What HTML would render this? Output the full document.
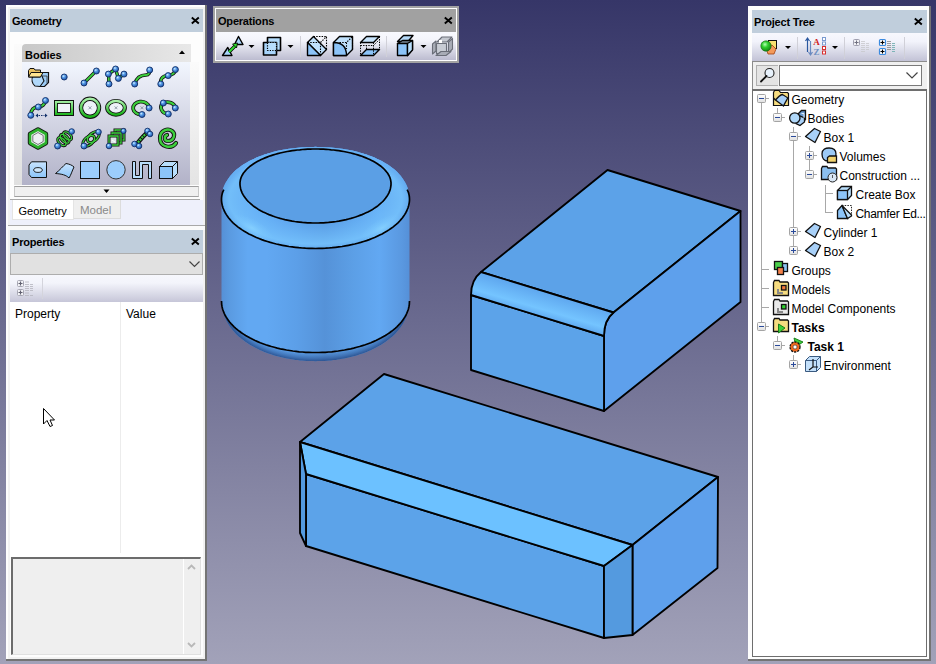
<!DOCTYPE html>
<html><head><meta charset="utf-8">
<style>
*{margin:0;padding:0;box-sizing:border-box}
html,body{width:936px;height:664px;overflow:hidden}
body{position:relative;background:linear-gradient(to bottom,#363668 0px,#a2a2b9 664px);font-family:"Liberation Sans",sans-serif;color:#000}
.a{position:absolute}
.hdr{position:absolute;background:#c0cedc;font-weight:bold;font-size:11px;line-height:23px;padding-left:2px;letter-spacing:-0.2px}
.x{position:absolute;width:11px;height:11px}
.t{position:absolute;font-size:12px;white-space:nowrap;line-height:14px}
</style></head><body>

<!-- 3D scene -->
<svg class="a" style="left:0;top:0" width="936" height="664" viewBox="0 0 936 664" id="scene">
<defs>
<linearGradient id="cylSide" x1="221.5" y1="0" x2="409.5" y2="0" gradientUnits="userSpaceOnUse">
<stop offset="0" stop-color="#5690d6"/>
<stop offset="0.04" stop-color="#5a9ae0"/>
<stop offset="0.14" stop-color="#62a8f2"/>
<stop offset="0.24" stop-color="#62a8f2"/>
<stop offset="0.4" stop-color="#5c9fe8"/>
<stop offset="0.55" stop-color="#5592d8"/>
<stop offset="0.7" stop-color="#5c9fe6"/>
<stop offset="0.84" stop-color="#62a8f2"/>
<stop offset="0.96" stop-color="#5a98e0"/>
<stop offset="1" stop-color="#5590d8"/>
</linearGradient>
<radialGradient id="cylFilHi" gradientUnits="userSpaceOnUse" cx="315.5" cy="199" r="49" gradientTransform="translate(315.5,199) scale(1.918,1) translate(-315.5,-199)">
<stop offset="0" stop-color="#7ac8ff" stop-opacity="0"/>
<stop offset="0.55" stop-color="#7ac8ff" stop-opacity="0"/>
<stop offset="0.8" stop-color="#7ac8ff" stop-opacity="0.45"/>
<stop offset="0.92" stop-color="#7ac8ff" stop-opacity="0.7"/>
<stop offset="1" stop-color="#7ac8ff" stop-opacity="0.25"/>
</radialGradient>
<radialGradient id="cylBotSh" gradientUnits="userSpaceOnUse" cx="315.5" cy="301" r="60" gradientTransform="translate(315.5,301) scale(1.567,1) translate(-315.5,-301)">
<stop offset="0" stop-color="#1c3c78" stop-opacity="0"/>
<stop offset="0.86" stop-color="#1c3c78" stop-opacity="0"/>
<stop offset="0.9" stop-color="#1c3c78" stop-opacity="0.15"/>
<stop offset="0.96" stop-color="#1c3c78" stop-opacity="0.45"/>
<stop offset="1" stop-color="#1c3c78" stop-opacity="0.7"/>
</radialGradient>
<linearGradient id="b2fil" x1="547" y1="292" x2="540" y2="316" gradientUnits="userSpaceOnUse">
<stop offset="0" stop-color="#5ea6ee"/>
<stop offset="0.72" stop-color="#74c4ff"/>
<stop offset="1" stop-color="#62acf2"/>
</linearGradient>
<radialGradient id="hiSpot"><stop offset="0" stop-color="#8ad4ff" stop-opacity="0.75"/><stop offset="0.5" stop-color="#80ccff" stop-opacity="0.35"/><stop offset="1" stop-color="#80ccff" stop-opacity="0"/></radialGradient>
<clipPath id="topFilClip"><path d="M221.5,199.0 L221.6,197.0 L221.8,194.8 L222.1,192.8 L222.6,190.6 L223.2,188.5 L223.9,186.6 L224.8,184.6 L225.7,182.7 L226.8,180.9 L227.9,179.2 L229.1,177.5 L230.4,175.8 L231.8,174.2 L233.3,172.6 L234.8,171.1 L236.5,169.6 L238.2,168.2 L239.9,167.0 L241.5,165.8 L243.3,164.6 L245.1,163.5 L246.9,162.4 L248.8,161.3 L250.8,160.3 L252.6,159.4 L254.7,158.4 L256.5,157.6 L258.5,156.8 L260.4,156.1 L262.3,155.4 L264.4,154.6 L266.5,153.9 L268.6,153.3 L270.8,152.7 L272.9,152.1 L274.8,151.6 L276.8,151.1 L278.9,150.6 L280.9,150.2 L283.0,149.8 L285.1,149.4 L287.2,149.1 L289.3,148.7 L291.5,148.4 L293.6,148.2 L295.7,147.9 L297.9,147.7 L300.1,147.5 L302.3,147.3 L304.5,147.2 L306.7,147.1 L308.9,147.0 L311.1,146.9 L313.3,146.9 L315.5,146.8 L317.7,146.9 L319.9,146.9 L322.1,147.0 L324.3,147.1 L326.5,147.2 L328.7,147.3 L330.9,147.5 L333.1,147.7 L335.3,147.9 L337.4,148.2 L339.5,148.4 L341.7,148.7 L343.8,149.1 L345.9,149.4 L348.0,149.8 L350.1,150.2 L352.1,150.6 L354.2,151.1 L356.2,151.6 L358.1,152.1 L360.2,152.7 L362.4,153.3 L364.5,153.9 L366.6,154.6 L368.7,155.4 L370.6,156.1 L372.5,156.8 L374.5,157.6 L376.3,158.4 L378.4,159.4 L380.2,160.3 L382.2,161.3 L384.1,162.4 L385.9,163.5 L387.7,164.6 L389.5,165.8 L391.1,167.0 L392.8,168.2 L394.5,169.6 L396.2,171.1 L397.7,172.6 L399.2,174.2 L400.6,175.8 L401.9,177.5 L403.1,179.2 L404.2,180.9 L405.3,182.7 L406.2,184.6 L407.1,186.6 L407.8,188.5 L408.4,190.6 L408.9,192.6 L409.2,194.8 L409.4,197.0 L409.5,199.0 L409.4,201.2 L409.1,203.3 L408.7,205.5 L408.1,207.6 L407.4,209.5 L406.5,211.4 L405.5,213.3 L404.4,215.1 L403.1,216.9 L401.9,218.5 L400.5,220.1 L399.1,221.7 L397.5,223.2 L395.9,224.7 L394.1,226.1 L392.5,227.4 L390.8,228.6 L389.1,229.8 L387.2,231.0 L385.4,232.1 L383.4,233.2 L381.4,234.3 L379.3,235.3 L377.5,236.2 L375.6,237.0 L373.7,237.9 L371.7,238.6 L369.8,239.4 L367.7,240.1 L365.7,240.8 L363.6,241.5 L361.4,242.2 L359.3,242.8 L357.1,243.4 L354.9,243.9 L352.6,244.5 L350.3,245.0 L348.0,245.4 L345.7,245.9 L343.4,246.3 L341.0,246.6 L338.6,247.0 L336.6,247.2 L334.6,247.4 L332.6,247.6 L330.6,247.8 L328.6,248.0 L326.5,248.1 L324.5,248.2 L322.5,248.3 L320.4,248.4 L318.4,248.5 L316.3,248.5 L314.3,248.5 L312.2,248.4 L310.2,248.4 L308.1,248.3 L306.1,248.2 L304.0,248.1 L302.0,248.0 L300.0,247.8 L298.0,247.6 L296.0,247.4 L294.0,247.2 L292.0,246.9 L289.6,246.6 L287.2,246.2 L284.9,245.8 L282.6,245.3 L280.3,244.9 L278.0,244.4 L275.8,243.8 L273.6,243.3 L271.4,242.7 L269.2,242.1 L267.1,241.4 L265.0,240.7 L262.9,240.0 L260.9,239.3 L258.9,238.5 L257.0,237.7 L255.1,236.9 L253.2,236.1 L251.4,235.2 L249.3,234.1 L247.3,233.1 L245.4,231.9 L243.5,230.8 L241.7,229.6 L239.9,228.4 L238.3,227.2 L236.7,225.9 L234.9,224.5 L233.3,223.0 L231.7,221.5 L230.3,219.9 L229.0,218.3 L227.7,216.7 L226.5,214.9 L225.4,213.1 L224.4,211.2 L223.6,209.3 L222.9,207.4 L222.3,205.2 L221.8,203.1 L221.6,200.9 Z"/></clipPath>
<clipPath id="cylBotClip"><path d="M409.5,301.0 L409.4,302.8 L409.3,304.6 L409.0,306.4 L408.6,308.2 L408.1,310.0 L407.4,311.7 L406.7,313.5 L405.9,315.2 L404.9,316.9 L403.8,318.6 L402.7,320.3 L401.4,322.0 L400.0,323.6 L398.5,325.2 L396.9,326.8 L395.2,328.3 L393.4,329.8 L391.5,331.3 L389.6,332.7 L387.5,334.1 L385.4,335.5 L383.1,336.8 L380.8,338.1 L378.4,339.3 L375.9,340.5 L373.4,341.6 L370.8,342.7 L368.1,343.7 L365.3,344.7 L362.5,345.6 L359.6,346.5 L356.7,347.3 L353.7,348.1 L350.7,348.8 L347.6,349.4 L344.5,350.0 L341.4,350.5 L338.2,351.0 L335.0,351.4 L331.8,351.8 L328.6,352.0 L325.3,352.3 L322.1,352.4 L318.8,352.5 L315.5,352.5 L312.2,352.5 L308.9,352.4 L305.7,352.3 L302.4,352.0 L299.2,351.8 L296.0,351.4 L292.8,351.0 L289.6,350.5 L286.5,350.0 L283.4,349.4 L280.3,348.8 L277.3,348.1 L274.3,347.3 L271.4,346.5 L268.5,345.6 L265.7,344.7 L262.9,343.7 L260.2,342.7 L257.6,341.6 L255.1,340.5 L252.6,339.3 L250.2,338.1 L247.9,336.8 L245.6,335.5 L243.5,334.1 L241.4,332.7 L239.5,331.3 L237.6,329.8 L235.8,328.3 L234.1,326.8 L232.5,325.2 L231.0,323.6 L229.6,322.0 L228.3,320.3 L227.2,318.6 L226.1,316.9 L225.1,315.2 L224.3,313.5 L223.6,311.7 L222.9,310.0 L222.4,308.2 L222.0,306.4 L221.7,304.6 L221.6,302.8 L221.5,301.0 L221.5,420 L409.5,420 Z"/></clipPath>
</defs>
<g stroke="#000" stroke-width="1.85" stroke-linejoin="round">
<!-- cylinder -->
<path d="M221.5,301.0 L221.5,199.0 L221.6,197.0 L221.8,194.8 L222.1,192.8 L222.6,190.6 L223.2,188.5 L223.9,186.6 L224.8,184.6 L225.7,182.7 L226.8,180.9 L227.9,179.2 L229.1,177.5 L230.4,175.8 L231.8,174.2 L233.3,172.6 L234.8,171.1 L236.5,169.6 L238.2,168.2 L239.9,167.0 L241.5,165.8 L243.3,164.6 L245.1,163.5 L246.9,162.4 L248.8,161.3 L250.8,160.3 L252.6,159.4 L254.7,158.4 L256.5,157.6 L258.5,156.8 L260.4,156.1 L262.3,155.4 L264.4,154.6 L266.5,153.9 L268.6,153.3 L270.8,152.7 L272.9,152.1 L274.8,151.6 L276.8,151.1 L278.9,150.6 L280.9,150.2 L283.0,149.8 L285.1,149.4 L287.2,149.1 L289.3,148.7 L291.5,148.4 L293.6,148.2 L295.7,147.9 L297.9,147.7 L300.1,147.5 L302.3,147.3 L304.5,147.2 L306.7,147.1 L308.9,147.0 L311.1,146.9 L313.3,146.9 L315.5,146.8 L317.7,146.9 L319.9,146.9 L322.1,147.0 L324.3,147.1 L326.5,147.2 L328.7,147.3 L330.9,147.5 L333.1,147.7 L335.3,147.9 L337.4,148.2 L339.5,148.4 L341.7,148.7 L343.8,149.1 L345.9,149.4 L348.0,149.8 L350.1,150.2 L352.1,150.6 L354.2,151.1 L356.2,151.6 L358.1,152.1 L360.2,152.7 L362.4,153.3 L364.5,153.9 L366.6,154.6 L368.7,155.4 L370.6,156.1 L372.5,156.8 L374.5,157.6 L376.3,158.4 L378.4,159.4 L380.2,160.3 L382.2,161.3 L384.1,162.4 L385.9,163.5 L387.7,164.6 L389.5,165.8 L391.1,167.0 L392.8,168.2 L394.5,169.6 L396.2,171.1 L397.7,172.6 L399.2,174.2 L400.6,175.8 L401.9,177.5 L403.1,179.2 L404.2,180.9 L405.3,182.7 L406.2,184.6 L407.1,186.6 L407.8,188.5 L408.4,190.6 L408.9,192.6 L409.2,194.8 L409.4,197.0 L409.5,199.0 L409.5,301.0 L409.4,303.2 L409.3,305.5 L409.0,307.6 L408.6,309.8 L408.0,312.0 L407.4,314.1 L406.7,316.0 L406.0,317.8 L405.1,319.7 L404.2,321.5 L403.1,323.4 L402.0,325.2 L400.9,326.9 L399.6,328.6 L398.3,330.2 L396.9,331.8 L395.5,333.4 L394.0,334.9 L392.4,336.4 L390.7,337.8 L389.0,339.2 L387.2,340.6 L385.4,342.0 L383.7,343.1 L382.0,344.2 L380.3,345.3 L378.4,346.3 L376.6,347.3 L374.7,348.3 L372.7,349.3 L370.8,350.2 L368.8,351.0 L366.7,351.9 L364.7,352.7 L362.8,353.4 L360.8,354.1 L358.7,354.7 L356.8,355.4 L354.8,355.9 L352.6,356.5 L350.6,357.0 L348.5,357.5 L346.3,358.0 L344.2,358.4 L342.0,358.8 L339.9,359.2 L337.7,359.5 L335.6,359.9 L333.3,360.1 L331.1,360.4 L328.9,360.6 L326.7,360.8 L324.4,360.9 L322.2,361.0 L320.0,361.1 L317.7,361.1 L315.5,361.2 L313.3,361.1 L311.0,361.1 L308.8,361.0 L306.6,360.9 L304.3,360.8 L302.1,360.6 L299.9,360.4 L297.7,360.1 L295.5,359.9 L293.3,359.5 L291.1,359.2 L289.0,358.8 L286.8,358.4 L284.7,358.0 L282.5,357.5 L280.4,357.0 L278.4,356.5 L276.2,355.9 L274.2,355.4 L272.3,354.7 L270.2,354.1 L268.2,353.4 L266.3,352.7 L264.3,351.9 L262.2,351.0 L260.2,350.2 L258.3,349.3 L256.3,348.3 L254.4,347.3 L252.6,346.3 L250.7,345.3 L249.0,344.2 L247.3,343.1 L245.6,342.0 L243.8,340.6 L242.0,339.2 L240.3,337.8 L238.6,336.4 L237.0,334.9 L235.5,333.4 L234.1,331.8 L232.7,330.2 L231.4,328.6 L230.1,326.9 L229.0,325.2 L227.9,323.4 L226.8,321.5 L225.9,319.7 L225.0,317.8 L224.3,316.0 L223.6,314.1 L223.0,312.0 L222.4,309.8 L222.0,307.6 L221.7,305.5 L221.6,303.2 Z" fill="url(#cylSide)" stroke="none"/>
<path d="M221.5,199.0 L221.6,197.0 L221.8,194.8 L222.1,192.8 L222.6,190.6 L223.2,188.5 L223.9,186.6 L224.8,184.6 L225.7,182.7 L226.8,180.9 L227.9,179.2 L229.1,177.5 L230.4,175.8 L231.8,174.2 L233.3,172.6 L234.8,171.1 L236.5,169.6 L238.2,168.2 L239.9,167.0 L241.5,165.8 L243.3,164.6 L245.1,163.5 L246.9,162.4 L248.8,161.3 L250.8,160.3 L252.6,159.4 L254.7,158.4 L256.5,157.6 L258.5,156.8 L260.4,156.1 L262.3,155.4 L264.4,154.6 L266.5,153.9 L268.6,153.3 L270.8,152.7 L272.9,152.1 L274.8,151.6 L276.8,151.1 L278.9,150.6 L280.9,150.2 L283.0,149.8 L285.1,149.4 L287.2,149.1 L289.3,148.7 L291.5,148.4 L293.6,148.2 L295.7,147.9 L297.9,147.7 L300.1,147.5 L302.3,147.3 L304.5,147.2 L306.7,147.1 L308.9,147.0 L311.1,146.9 L313.3,146.9 L315.5,146.8 L317.7,146.9 L319.9,146.9 L322.1,147.0 L324.3,147.1 L326.5,147.2 L328.7,147.3 L330.9,147.5 L333.1,147.7 L335.3,147.9 L337.4,148.2 L339.5,148.4 L341.7,148.7 L343.8,149.1 L345.9,149.4 L348.0,149.8 L350.1,150.2 L352.1,150.6 L354.2,151.1 L356.2,151.6 L358.1,152.1 L360.2,152.7 L362.4,153.3 L364.5,153.9 L366.6,154.6 L368.7,155.4 L370.6,156.1 L372.5,156.8 L374.5,157.6 L376.3,158.4 L378.4,159.4 L380.2,160.3 L382.2,161.3 L384.1,162.4 L385.9,163.5 L387.7,164.6 L389.5,165.8 L391.1,167.0 L392.8,168.2 L394.5,169.6 L396.2,171.1 L397.7,172.6 L399.2,174.2 L400.6,175.8 L401.9,177.5 L403.1,179.2 L404.2,180.9 L405.3,182.7 L406.2,184.6 L407.1,186.6 L407.8,188.5 L408.4,190.6 L408.9,192.6 L409.2,194.8 L409.4,197.0 L409.5,199.0 L409.4,201.2 L409.1,203.3 L408.7,205.5 L408.1,207.6 L407.4,209.5 L406.5,211.4 L405.5,213.3 L404.4,215.1 L403.1,216.9 L401.9,218.5 L400.5,220.1 L399.1,221.7 L397.5,223.2 L395.9,224.7 L394.1,226.1 L392.5,227.4 L390.8,228.6 L389.1,229.8 L387.2,231.0 L385.4,232.1 L383.4,233.2 L381.4,234.3 L379.3,235.3 L377.5,236.2 L375.6,237.0 L373.7,237.9 L371.7,238.6 L369.8,239.4 L367.7,240.1 L365.7,240.8 L363.6,241.5 L361.4,242.2 L359.3,242.8 L357.1,243.4 L354.9,243.9 L352.6,244.5 L350.3,245.0 L348.0,245.4 L345.7,245.9 L343.4,246.3 L341.0,246.6 L338.6,247.0 L336.6,247.2 L334.6,247.4 L332.6,247.6 L330.6,247.8 L328.6,248.0 L326.5,248.1 L324.5,248.2 L322.5,248.3 L320.4,248.4 L318.4,248.5 L316.3,248.5 L314.3,248.5 L312.2,248.4 L310.2,248.4 L308.1,248.3 L306.1,248.2 L304.0,248.1 L302.0,248.0 L300.0,247.8 L298.0,247.6 L296.0,247.4 L294.0,247.2 L292.0,246.9 L289.6,246.6 L287.2,246.2 L284.9,245.8 L282.6,245.3 L280.3,244.9 L278.0,244.4 L275.8,243.8 L273.6,243.3 L271.4,242.7 L269.2,242.1 L267.1,241.4 L265.0,240.7 L262.9,240.0 L260.9,239.3 L258.9,238.5 L257.0,237.7 L255.1,236.9 L253.2,236.1 L251.4,235.2 L249.3,234.1 L247.3,233.1 L245.4,231.9 L243.5,230.8 L241.7,229.6 L239.9,228.4 L238.3,227.2 L236.7,225.9 L234.9,224.5 L233.3,223.0 L231.7,221.5 L230.3,219.9 L229.0,218.3 L227.7,216.7 L226.5,214.9 L225.4,213.1 L224.4,211.2 L223.6,209.3 L222.9,207.4 L222.3,205.2 L221.8,203.1 L221.6,200.9 Z" fill="url(#cylSide)" stroke="none"/>
<path d="M221.5,199.0 L221.6,197.0 L221.8,194.8 L222.1,192.8 L222.6,190.6 L223.2,188.5 L223.9,186.6 L224.8,184.6 L225.7,182.7 L226.8,180.9 L227.9,179.2 L229.1,177.5 L230.4,175.8 L231.8,174.2 L233.3,172.6 L234.8,171.1 L236.5,169.6 L238.2,168.2 L239.9,167.0 L241.5,165.8 L243.3,164.6 L245.1,163.5 L246.9,162.4 L248.8,161.3 L250.8,160.3 L252.6,159.4 L254.7,158.4 L256.5,157.6 L258.5,156.8 L260.4,156.1 L262.3,155.4 L264.4,154.6 L266.5,153.9 L268.6,153.3 L270.8,152.7 L272.9,152.1 L274.8,151.6 L276.8,151.1 L278.9,150.6 L280.9,150.2 L283.0,149.8 L285.1,149.4 L287.2,149.1 L289.3,148.7 L291.5,148.4 L293.6,148.2 L295.7,147.9 L297.9,147.7 L300.1,147.5 L302.3,147.3 L304.5,147.2 L306.7,147.1 L308.9,147.0 L311.1,146.9 L313.3,146.9 L315.5,146.8 L317.7,146.9 L319.9,146.9 L322.1,147.0 L324.3,147.1 L326.5,147.2 L328.7,147.3 L330.9,147.5 L333.1,147.7 L335.3,147.9 L337.4,148.2 L339.5,148.4 L341.7,148.7 L343.8,149.1 L345.9,149.4 L348.0,149.8 L350.1,150.2 L352.1,150.6 L354.2,151.1 L356.2,151.6 L358.1,152.1 L360.2,152.7 L362.4,153.3 L364.5,153.9 L366.6,154.6 L368.7,155.4 L370.6,156.1 L372.5,156.8 L374.5,157.6 L376.3,158.4 L378.4,159.4 L380.2,160.3 L382.2,161.3 L384.1,162.4 L385.9,163.5 L387.7,164.6 L389.5,165.8 L391.1,167.0 L392.8,168.2 L394.5,169.6 L396.2,171.1 L397.7,172.6 L399.2,174.2 L400.6,175.8 L401.9,177.5 L403.1,179.2 L404.2,180.9 L405.3,182.7 L406.2,184.6 L407.1,186.6 L407.8,188.5 L408.4,190.6 L408.9,192.6 L409.2,194.8 L409.4,197.0 L409.5,199.0 L409.4,201.2 L409.1,203.3 L408.7,205.5 L408.1,207.6 L407.4,209.5 L406.5,211.4 L405.5,213.3 L404.4,215.1 L403.1,216.9 L401.9,218.5 L400.5,220.1 L399.1,221.7 L397.5,223.2 L395.9,224.7 L394.1,226.1 L392.5,227.4 L390.8,228.6 L389.1,229.8 L387.2,231.0 L385.4,232.1 L383.4,233.2 L381.4,234.3 L379.3,235.3 L377.5,236.2 L375.6,237.0 L373.7,237.9 L371.7,238.6 L369.8,239.4 L367.7,240.1 L365.7,240.8 L363.6,241.5 L361.4,242.2 L359.3,242.8 L357.1,243.4 L354.9,243.9 L352.6,244.5 L350.3,245.0 L348.0,245.4 L345.7,245.9 L343.4,246.3 L341.0,246.6 L338.6,247.0 L336.6,247.2 L334.6,247.4 L332.6,247.6 L330.6,247.8 L328.6,248.0 L326.5,248.1 L324.5,248.2 L322.5,248.3 L320.4,248.4 L318.4,248.5 L316.3,248.5 L314.3,248.5 L312.2,248.4 L310.2,248.4 L308.1,248.3 L306.1,248.2 L304.0,248.1 L302.0,248.0 L300.0,247.8 L298.0,247.6 L296.0,247.4 L294.0,247.2 L292.0,246.9 L289.6,246.6 L287.2,246.2 L284.9,245.8 L282.6,245.3 L280.3,244.9 L278.0,244.4 L275.8,243.8 L273.6,243.3 L271.4,242.7 L269.2,242.1 L267.1,241.4 L265.0,240.7 L262.9,240.0 L260.9,239.3 L258.9,238.5 L257.0,237.7 L255.1,236.9 L253.2,236.1 L251.4,235.2 L249.3,234.1 L247.3,233.1 L245.4,231.9 L243.5,230.8 L241.7,229.6 L239.9,228.4 L238.3,227.2 L236.7,225.9 L234.9,224.5 L233.3,223.0 L231.7,221.5 L230.3,219.9 L229.0,218.3 L227.7,216.7 L226.5,214.9 L225.4,213.1 L224.4,211.2 L223.6,209.3 L222.9,207.4 L222.3,205.2 L221.8,203.1 L221.6,200.9 Z" fill="#64aef6" fill-opacity="0.55" stroke="none"/>
<path d="M221.5,199.0 L221.6,197.0 L221.8,194.8 L222.1,192.8 L222.6,190.6 L223.2,188.5 L223.9,186.6 L224.8,184.6 L225.7,182.7 L226.8,180.9 L227.9,179.2 L229.1,177.5 L230.4,175.8 L231.8,174.2 L233.3,172.6 L234.8,171.1 L236.5,169.6 L238.2,168.2 L239.9,167.0 L241.5,165.8 L243.3,164.6 L245.1,163.5 L246.9,162.4 L248.8,161.3 L250.8,160.3 L252.6,159.4 L254.7,158.4 L256.5,157.6 L258.5,156.8 L260.4,156.1 L262.3,155.4 L264.4,154.6 L266.5,153.9 L268.6,153.3 L270.8,152.7 L272.9,152.1 L274.8,151.6 L276.8,151.1 L278.9,150.6 L280.9,150.2 L283.0,149.8 L285.1,149.4 L287.2,149.1 L289.3,148.7 L291.5,148.4 L293.6,148.2 L295.7,147.9 L297.9,147.7 L300.1,147.5 L302.3,147.3 L304.5,147.2 L306.7,147.1 L308.9,147.0 L311.1,146.9 L313.3,146.9 L315.5,146.8 L317.7,146.9 L319.9,146.9 L322.1,147.0 L324.3,147.1 L326.5,147.2 L328.7,147.3 L330.9,147.5 L333.1,147.7 L335.3,147.9 L337.4,148.2 L339.5,148.4 L341.7,148.7 L343.8,149.1 L345.9,149.4 L348.0,149.8 L350.1,150.2 L352.1,150.6 L354.2,151.1 L356.2,151.6 L358.1,152.1 L360.2,152.7 L362.4,153.3 L364.5,153.9 L366.6,154.6 L368.7,155.4 L370.6,156.1 L372.5,156.8 L374.5,157.6 L376.3,158.4 L378.4,159.4 L380.2,160.3 L382.2,161.3 L384.1,162.4 L385.9,163.5 L387.7,164.6 L389.5,165.8 L391.1,167.0 L392.8,168.2 L394.5,169.6 L396.2,171.1 L397.7,172.6 L399.2,174.2 L400.6,175.8 L401.9,177.5 L403.1,179.2 L404.2,180.9 L405.3,182.7 L406.2,184.6 L407.1,186.6 L407.8,188.5 L408.4,190.6 L408.9,192.6 L409.2,194.8 L409.4,197.0 L409.5,199.0 L409.4,201.2 L409.1,203.3 L408.7,205.5 L408.1,207.6 L407.4,209.5 L406.5,211.4 L405.5,213.3 L404.4,215.1 L403.1,216.9 L401.9,218.5 L400.5,220.1 L399.1,221.7 L397.5,223.2 L395.9,224.7 L394.1,226.1 L392.5,227.4 L390.8,228.6 L389.1,229.8 L387.2,231.0 L385.4,232.1 L383.4,233.2 L381.4,234.3 L379.3,235.3 L377.5,236.2 L375.6,237.0 L373.7,237.9 L371.7,238.6 L369.8,239.4 L367.7,240.1 L365.7,240.8 L363.6,241.5 L361.4,242.2 L359.3,242.8 L357.1,243.4 L354.9,243.9 L352.6,244.5 L350.3,245.0 L348.0,245.4 L345.7,245.9 L343.4,246.3 L341.0,246.6 L338.6,247.0 L336.6,247.2 L334.6,247.4 L332.6,247.6 L330.6,247.8 L328.6,248.0 L326.5,248.1 L324.5,248.2 L322.5,248.3 L320.4,248.4 L318.4,248.5 L316.3,248.5 L314.3,248.5 L312.2,248.4 L310.2,248.4 L308.1,248.3 L306.1,248.2 L304.0,248.1 L302.0,248.0 L300.0,247.8 L298.0,247.6 L296.0,247.4 L294.0,247.2 L292.0,246.9 L289.6,246.6 L287.2,246.2 L284.9,245.8 L282.6,245.3 L280.3,244.9 L278.0,244.4 L275.8,243.8 L273.6,243.3 L271.4,242.7 L269.2,242.1 L267.1,241.4 L265.0,240.7 L262.9,240.0 L260.9,239.3 L258.9,238.5 L257.0,237.7 L255.1,236.9 L253.2,236.1 L251.4,235.2 L249.3,234.1 L247.3,233.1 L245.4,231.9 L243.5,230.8 L241.7,229.6 L239.9,228.4 L238.3,227.2 L236.7,225.9 L234.9,224.5 L233.3,223.0 L231.7,221.5 L230.3,219.9 L229.0,218.3 L227.7,216.7 L226.5,214.9 L225.4,213.1 L224.4,211.2 L223.6,209.3 L222.9,207.4 L222.3,205.2 L221.8,203.1 L221.6,200.9 Z" fill="url(#cylFilHi)" stroke="none"/>
<g clip-path="url(#topFilClip)"><ellipse cx="252" cy="228" rx="24" ry="9" transform="rotate(28 252 228)" fill="url(#hiSpot)" stroke="none"/><ellipse cx="382" cy="228" rx="24" ry="9" transform="rotate(-28 382 228)" fill="url(#hiSpot)" stroke="none"/></g>
<path d="M221.5,301.0 L221.5,199.0 L221.6,197.0 L221.8,194.8 L222.1,192.8 L222.6,190.6 L223.2,188.5 L223.9,186.6 L224.8,184.6 L225.7,182.7 L226.8,180.9 L227.9,179.2 L229.1,177.5 L230.4,175.8 L231.8,174.2 L233.3,172.6 L234.8,171.1 L236.5,169.6 L238.2,168.2 L239.9,167.0 L241.5,165.8 L243.3,164.6 L245.1,163.5 L246.9,162.4 L248.8,161.3 L250.8,160.3 L252.6,159.4 L254.7,158.4 L256.5,157.6 L258.5,156.8 L260.4,156.1 L262.3,155.4 L264.4,154.6 L266.5,153.9 L268.6,153.3 L270.8,152.7 L272.9,152.1 L274.8,151.6 L276.8,151.1 L278.9,150.6 L280.9,150.2 L283.0,149.8 L285.1,149.4 L287.2,149.1 L289.3,148.7 L291.5,148.4 L293.6,148.2 L295.7,147.9 L297.9,147.7 L300.1,147.5 L302.3,147.3 L304.5,147.2 L306.7,147.1 L308.9,147.0 L311.1,146.9 L313.3,146.9 L315.5,146.8 L317.7,146.9 L319.9,146.9 L322.1,147.0 L324.3,147.1 L326.5,147.2 L328.7,147.3 L330.9,147.5 L333.1,147.7 L335.3,147.9 L337.4,148.2 L339.5,148.4 L341.7,148.7 L343.8,149.1 L345.9,149.4 L348.0,149.8 L350.1,150.2 L352.1,150.6 L354.2,151.1 L356.2,151.6 L358.1,152.1 L360.2,152.7 L362.4,153.3 L364.5,153.9 L366.6,154.6 L368.7,155.4 L370.6,156.1 L372.5,156.8 L374.5,157.6 L376.3,158.4 L378.4,159.4 L380.2,160.3 L382.2,161.3 L384.1,162.4 L385.9,163.5 L387.7,164.6 L389.5,165.8 L391.1,167.0 L392.8,168.2 L394.5,169.6 L396.2,171.1 L397.7,172.6 L399.2,174.2 L400.6,175.8 L401.9,177.5 L403.1,179.2 L404.2,180.9 L405.3,182.7 L406.2,184.6 L407.1,186.6 L407.8,188.5 L408.4,190.6 L408.9,192.6 L409.2,194.8 L409.4,197.0 L409.5,199.0 L409.5,301.0 L409.4,303.2 L409.3,305.5 L409.0,307.6 L408.6,309.8 L408.0,312.0 L407.4,314.1 L406.7,316.0 L406.0,317.8 L405.1,319.7 L404.2,321.5 L403.1,323.4 L402.0,325.2 L400.9,326.9 L399.6,328.6 L398.3,330.2 L396.9,331.8 L395.5,333.4 L394.0,334.9 L392.4,336.4 L390.7,337.8 L389.0,339.2 L387.2,340.6 L385.4,342.0 L383.7,343.1 L382.0,344.2 L380.3,345.3 L378.4,346.3 L376.6,347.3 L374.7,348.3 L372.7,349.3 L370.8,350.2 L368.8,351.0 L366.7,351.9 L364.7,352.7 L362.8,353.4 L360.8,354.1 L358.7,354.7 L356.8,355.4 L354.8,355.9 L352.6,356.5 L350.6,357.0 L348.5,357.5 L346.3,358.0 L344.2,358.4 L342.0,358.8 L339.9,359.2 L337.7,359.5 L335.6,359.9 L333.3,360.1 L331.1,360.4 L328.9,360.6 L326.7,360.8 L324.4,360.9 L322.2,361.0 L320.0,361.1 L317.7,361.1 L315.5,361.2 L313.3,361.1 L311.0,361.1 L308.8,361.0 L306.6,360.9 L304.3,360.8 L302.1,360.6 L299.9,360.4 L297.7,360.1 L295.5,359.9 L293.3,359.5 L291.1,359.2 L289.0,358.8 L286.8,358.4 L284.7,358.0 L282.5,357.5 L280.4,357.0 L278.4,356.5 L276.2,355.9 L274.2,355.4 L272.3,354.7 L270.2,354.1 L268.2,353.4 L266.3,352.7 L264.3,351.9 L262.2,351.0 L260.2,350.2 L258.3,349.3 L256.3,348.3 L254.4,347.3 L252.6,346.3 L250.7,345.3 L249.0,344.2 L247.3,343.1 L245.6,342.0 L243.8,340.6 L242.0,339.2 L240.3,337.8 L238.6,336.4 L237.0,334.9 L235.5,333.4 L234.1,331.8 L232.7,330.2 L231.4,328.6 L230.1,326.9 L229.0,325.2 L227.9,323.4 L226.8,321.5 L225.9,319.7 L225.0,317.8 L224.3,316.0 L223.6,314.1 L223.0,312.0 L222.4,309.8 L222.0,307.6 L221.7,305.5 L221.6,303.2 Z" fill="url(#cylBotSh)" stroke="none" clip-path="url(#cylBotClip)"/>
<path d="M391.0,183.5 L391.0,184.9 L390.8,186.3 L390.6,187.6 L390.3,189.0 L389.9,190.4 L389.4,191.7 L388.8,193.1 L388.1,194.4 L387.3,195.7 L386.4,197.0 L385.5,198.3 L384.5,199.6 L383.4,200.8 L382.2,202.0 L380.9,203.2 L379.5,204.4 L378.1,205.6 L376.6,206.7 L375.0,207.8 L373.3,208.9 L371.6,209.9 L369.8,210.9 L367.9,211.9 L366.0,212.8 L364.0,213.7 L362.0,214.6 L359.9,215.4 L357.7,216.2 L355.5,217.0 L353.2,217.7 L350.9,218.4 L348.6,219.0 L346.2,219.6 L343.8,220.1 L341.3,220.6 L338.8,221.1 L336.3,221.5 L333.8,221.8 L331.2,222.1 L328.6,222.4 L326.0,222.6 L323.4,222.8 L320.8,222.9 L318.1,223.0 L315.5,223.0 L312.9,223.0 L310.2,222.9 L307.6,222.8 L305.0,222.6 L302.4,222.4 L299.8,222.1 L297.2,221.8 L294.7,221.5 L292.2,221.1 L289.7,220.6 L287.2,220.1 L284.8,219.6 L282.4,219.0 L280.1,218.4 L277.8,217.7 L275.5,217.0 L273.3,216.2 L271.1,215.4 L269.0,214.6 L267.0,213.7 L265.0,212.8 L263.1,211.9 L261.2,210.9 L259.4,209.9 L257.7,208.9 L256.0,207.8 L254.4,206.7 L252.9,205.6 L251.5,204.4 L250.1,203.2 L248.8,202.0 L247.6,200.8 L246.5,199.6 L245.5,198.3 L244.6,197.0 L243.7,195.7 L242.9,194.4 L242.2,193.1 L241.6,191.7 L241.1,190.4 L240.7,189.0 L240.4,187.6 L240.2,186.3 L240.0,184.9 L240.0,183.5 L240.0,182.3 L240.2,181.1 L240.4,179.9 L240.7,178.7 L241.1,177.5 L241.6,176.3 L242.2,175.2 L242.9,174.0 L243.7,172.8 L244.6,171.7 L245.5,170.6 L246.5,169.5 L247.6,168.4 L248.8,167.3 L250.1,166.2 L251.5,165.2 L252.9,164.2 L254.4,163.2 L256.0,162.3 L257.7,161.3 L259.4,160.4 L261.2,159.5 L263.1,158.7 L265.0,157.9 L267.0,157.1 L269.0,156.3 L271.1,155.6 L273.3,154.9 L275.5,154.2 L277.7,153.6 L280.1,153.0 L282.4,152.5 L284.8,152.0 L287.2,151.5 L289.7,151.1 L292.2,150.7 L294.7,150.3 L297.2,150.0 L299.8,149.8 L302.4,149.5 L305.0,149.3 L307.6,149.2 L310.2,149.1 L312.9,149.0 L315.5,149.0 L318.1,149.0 L320.8,149.1 L323.4,149.2 L326.0,149.3 L328.6,149.5 L331.2,149.8 L333.8,150.0 L336.3,150.3 L338.8,150.7 L341.3,151.1 L343.8,151.5 L346.2,152.0 L348.6,152.5 L350.9,153.0 L353.2,153.6 L355.5,154.2 L357.7,154.9 L359.9,155.6 L362.0,156.3 L364.0,157.1 L366.0,157.9 L367.9,158.7 L369.8,159.5 L371.6,160.4 L373.3,161.3 L375.0,162.3 L376.6,163.2 L378.1,164.2 L379.5,165.2 L380.9,166.2 L382.2,167.3 L383.4,168.4 L384.5,169.5 L385.5,170.6 L386.4,171.7 L387.3,172.8 L388.1,174.0 L388.8,175.2 L389.4,176.3 L389.9,177.5 L390.3,178.7 L390.6,179.9 L390.8,181.1 L391.0,182.3 L391.0,183.5 Z" fill="#5b9fe5" stroke-width="1.7"/>
<path d="M407.2,189.6 L407.9,191.1 L408.5,192.6 L408.9,194.2 L409.2,195.7 L409.4,197.2 L409.5,198.8 L409.5,200.5 L409.3,202.3 L409.0,204.1 L408.6,205.8 L408.1,207.6 L407.4,209.3 L406.7,211.0 L405.8,212.7 L404.8,214.4 L403.7,216.1 L402.5,217.8 L401.1,219.4 L399.7,221.0 L398.2,222.6 L396.5,224.1 L394.7,225.6 L392.9,227.1 L390.9,228.5 L388.9,229.9 L386.7,231.3 L384.5,232.6 L382.1,233.9 L379.7,235.1 L377.2,236.3 L374.6,237.5 L372.0,238.5 L369.3,239.6 L366.5,240.6 L363.6,241.5 L360.7,242.4 L357.7,243.2 L354.7,244.0 L351.6,244.7 L348.5,245.3 L345.3,245.9 L342.1,246.5 L338.8,246.9 L335.5,247.3 L332.2,247.7 L328.9,248.0 L325.6,248.2 L322.2,248.3 L318.9,248.4 L315.5,248.5 L312.1,248.4 L308.8,248.3 L305.4,248.2 L302.1,248.0 L298.8,247.7 L295.5,247.3 L292.2,246.9 L288.9,246.5 L285.7,245.9 L282.5,245.3 L279.4,244.7 L276.3,244.0 L273.3,243.2 L270.3,242.4 L267.4,241.5 L264.5,240.6 L261.7,239.6 L259.0,238.5 L256.4,237.5 L253.8,236.3 L251.3,235.1 L248.9,233.9 L246.5,232.6 L244.3,231.3 L242.1,229.9 L240.1,228.5 L238.1,227.1 L236.3,225.6 L234.5,224.1 L232.8,222.6 L231.3,221.0 L229.9,219.4 L228.5,217.8 L227.3,216.1 L226.2,214.4 L225.2,212.7 L224.3,211.0 L223.6,209.3 L222.9,207.6 L222.4,205.8 L222.0,204.1 L221.7,202.3 L221.5,200.5 L221.5,198.8 L221.6,197.2 L221.8,195.7 L222.1,194.2 L222.5,192.6 L223.1,191.1 L223.8,189.6" fill="none" stroke-width="1.7"/>
<path d="M409.5,301.0 L409.4,302.8 L409.3,304.6 L409.0,306.4 L408.6,308.2 L408.1,310.0 L407.4,311.7 L406.7,313.5 L405.9,315.2 L404.9,316.9 L403.8,318.6 L402.7,320.3 L401.4,322.0 L400.0,323.6 L398.5,325.2 L396.9,326.8 L395.2,328.3 L393.4,329.8 L391.5,331.3 L389.6,332.7 L387.5,334.1 L385.4,335.5 L383.1,336.8 L380.8,338.1 L378.4,339.3 L375.9,340.5 L373.4,341.6 L370.8,342.7 L368.1,343.7 L365.3,344.7 L362.5,345.6 L359.6,346.5 L356.7,347.3 L353.7,348.1 L350.7,348.8 L347.6,349.4 L344.5,350.0 L341.4,350.5 L338.2,351.0 L335.0,351.4 L331.8,351.8 L328.6,352.0 L325.3,352.3 L322.1,352.4 L318.8,352.5 L315.5,352.5 L312.2,352.5 L308.9,352.4 L305.7,352.3 L302.4,352.0 L299.2,351.8 L296.0,351.4 L292.8,351.0 L289.6,350.5 L286.5,350.0 L283.4,349.4 L280.3,348.8 L277.3,348.1 L274.3,347.3 L271.4,346.5 L268.5,345.6 L265.7,344.7 L262.9,343.7 L260.2,342.7 L257.6,341.6 L255.1,340.5 L252.6,339.3 L250.2,338.1 L247.9,336.8 L245.6,335.5 L243.5,334.1 L241.4,332.7 L239.5,331.3 L237.6,329.8 L235.8,328.3 L234.1,326.8 L232.5,325.2 L231.0,323.6 L229.6,322.0 L228.3,320.3 L227.2,318.6 L226.1,316.9 L225.1,315.2 L224.3,313.5 L223.6,311.7 L222.9,310.0 L222.4,308.2 L222.0,306.4 L221.7,304.6 L221.6,302.8 L221.5,301.0" fill="none" stroke-width="1.7"/>
<!-- box 2 -->
<path d="M481,272 L607.5,170 L740.5,211 L613.5,312.5 Z" fill="#5ca2e8"/>
<path d="M613.5,312.5 L740.5,211 L740.5,302 L604,411 L604,336 Q604,320 613.5,312.5 Z" fill="#5ea0ec"/>
<path d="M471,295 L604,336 L604,411 L471,370 Z" fill="#5ca3e9"/>
<path d="M481,272 L613.5,312.5 Q604,320 604,336 L471,295 Q471,280 481,272 Z" fill="url(#b2fil)"/>
<!-- box 3 -->
<path d="M384,374 L718,477 L632.5,545 L300,442 Z" fill="#5ca2e8"/>
<path d="M632.5,545 L718,477 L717.5,568 L632.5,635 Z" fill="#5ea0ec"/>
<path d="M306,474 L604,566 L604,638 L306,546 Z" fill="#5ca3e9"/>
<path d="M300,442 L632.5,545 L604,566 L306,474 Z" fill="#6cc1ff"/>
<path d="M632.5,545 L604,566 L604,638 L632.5,635 Z" fill="#549adf"/>
<path d="M300,442 L306,474 L306,546 L300,533 Z" fill="#549adf"/>
</g>
</svg>

<!-- LEFT PANEL -->
<div class="a" style="left:6px;top:5px;width:201px;height:656px;background:#fdfdfd;border-right:2px solid #747474;border-bottom:2px solid #747474"></div>
<div class="a" style="left:8px;top:7px;width:197px;height:652px;border:2px solid #f2f2f2"></div>
<div class="hdr" style="left:10px;top:9px;width:193px;height:23px;padding-top:1px">Geometry</div>
<svg class="x" style="left:190px;top:15px" viewBox="0 0 11 11"><path d="M1.8,2.5 L8.8,8.5 M8.8,2.5 L1.8,8.5" stroke="#000" stroke-width="1.9"/></svg>
<!-- toolbox frame strips -->
<div class="a" style="left:14px;top:44px;width:8px;height:141px;background:linear-gradient(#fbfbfb,#e0e0e0)"></div>
<div class="a" style="left:190px;top:62px;width:9px;height:123px;background:linear-gradient(#fbfbfb,#e4e4e4)"></div>
<div class="a" style="left:22px;top:44px;width:169px;height:18px;border-radius:4px 0 0 0;background:linear-gradient(to right,#c8c8c8,#e8e8e8);font-weight:bold;font-size:11px;line-height:23px;padding-left:3px">Bodies</div>
<svg class="a" style="left:178px;top:50px" width="8" height="5"><path d="M1,4 L4,0.5 L7,4 Z" fill="#000"/></svg>
<div class="a" style="left:22px;top:62px;width:168px;height:123px;background:linear-gradient(#f2f6fe,#b2b2c8)"></div>
<!-- ICONS LEFT -->
<svg class="a" style="left:0;top:0" width="210" height="200" viewBox="0 0 210 200">
<defs>
<radialGradient id="ball" cx="0.38" cy="0.35" r="0.7"><stop offset="0" stop-color="#d8f0ff"/><stop offset="0.35" stop-color="#5aa0ea"/><stop offset="1" stop-color="#1848a0"/></radialGradient>
<linearGradient id="lb" x1="0" y1="0" x2="0" y2="1"><stop offset="0" stop-color="#c8e4ff"/><stop offset="1" stop-color="#8cc4f8"/></linearGradient>
<linearGradient id="gring" x1="0" y1="0" x2="0" y2="1"><stop offset="0" stop-color="#a8f0a8"/><stop offset="1" stop-color="#18b418"/></linearGradient>
</defs>
<path d="M39.5,75.5 L42.5,72.5 L48.5,72.5 L48.5,82.5 L44.5,86.5 L39.5,86.5 Z" fill="#9cccf6" stroke="#111" stroke-width="1.2"/><path d="M41,76 L47,76 L47,83" fill="none" stroke="#333" stroke-width="0.8"/>
<path d="M33,76 C35,73 40,73 42,76 L44,81 L40,86.5 L35,86 C32,84 31,79 33,76 Z" fill="#b0d8fa" stroke="#111" stroke-width="1.1"/>
<path d="M28.5,70.5 L30,68.5 L34,68.5 L35,70 L40.5,70 L40.5,77 L28.5,77 Z" fill="#e8c060" stroke="#111" stroke-width="1"/>
<path d="M28.5,77 L31,72.5 L43,72.5 L40.5,77 Z" fill="#ffe490" stroke="#111" stroke-width="1"/>
<circle cx="64.2" cy="77" r="3" fill="url(#ball)" stroke="#12306a" stroke-width="0.9"/>
<path d="M84,83 L96,71" fill="none" stroke="#111" stroke-width="3.4000000000000004" stroke-linecap="round" stroke-linejoin="round"/><path d="M84,83 L96,71" fill="none" stroke="#3ccf3c" stroke-width="1.8" stroke-linecap="round" stroke-linejoin="round"/>
<circle cx="84" cy="83" r="3.0" fill="url(#ball)" stroke="#12306a" stroke-width="0.9"/>
<circle cx="96.4" cy="71" r="3.0" fill="url(#ball)" stroke="#12306a" stroke-width="0.9"/>
<path d="M109,84 L108.5,74 L115.6,69 L118.4,78.4 L124,74" fill="none" stroke="#111" stroke-width="3.4000000000000004" stroke-linecap="round" stroke-linejoin="round"/><path d="M109,84 L108.5,74 L115.6,69 L118.4,78.4 L124,74" fill="none" stroke="#3ccf3c" stroke-width="1.8" stroke-linecap="round" stroke-linejoin="round"/>
<circle cx="109" cy="84" r="3" fill="url(#ball)" stroke="#12306a" stroke-width="0.9"/>
<circle cx="108.4" cy="74.1" r="3" fill="url(#ball)" stroke="#12306a" stroke-width="0.9"/>
<circle cx="115.6" cy="69" r="3" fill="url(#ball)" stroke="#12306a" stroke-width="0.9"/>
<circle cx="118.4" cy="78.4" r="3" fill="url(#ball)" stroke="#12306a" stroke-width="0.9"/>
<circle cx="124" cy="74.1" r="3" fill="url(#ball)" stroke="#12306a" stroke-width="0.9"/>
<path d="M134.7,84 C137,76 142,75 146,75 C149,75 150,72 149.7,70" fill="none" stroke="#111" stroke-width="3.6" stroke-linecap="round" stroke-linejoin="round"/><path d="M134.7,84 C137,76 142,75 146,75 C149,75 150,72 149.7,70" fill="none" stroke="#3ccf3c" stroke-width="2" stroke-linecap="round" stroke-linejoin="round"/>
<circle cx="134.7" cy="84" r="3.0" fill="url(#ball)" stroke="#12306a" stroke-width="0.9"/>
<circle cx="149.7" cy="70" r="3.0" fill="url(#ball)" stroke="#12306a" stroke-width="0.9"/>
<path d="M160.8,84 C160,79 162,76 168.2,75.6 C172,75 175,73 175.4,69.6" fill="none" stroke="#111" stroke-width="3.6" stroke-linecap="round" stroke-linejoin="round"/><path d="M160.8,84 C160,79 162,76 168.2,75.6 C172,75 175,73 175.4,69.6" fill="none" stroke="#3ccf3c" stroke-width="2" stroke-linecap="round" stroke-linejoin="round"/>
<circle cx="160.8" cy="84" r="3.0" fill="url(#ball)" stroke="#12306a" stroke-width="0.9"/>
<circle cx="168.2" cy="75.6" r="3.0" fill="url(#ball)" stroke="#12306a" stroke-width="0.9"/>
<circle cx="175.4" cy="69.6" r="3.0" fill="url(#ball)" stroke="#12306a" stroke-width="0.9"/>
<path d="M30.8,115 C31,109 34,107 38.3,107 C42,107 45,104 45.5,100.5" fill="none" stroke="#111" stroke-width="3.6" stroke-linecap="round" stroke-linejoin="round"/><path d="M30.8,115 C31,109 34,107 38.3,107 C42,107 45,104 45.5,100.5" fill="none" stroke="#3ccf3c" stroke-width="2" stroke-linecap="round" stroke-linejoin="round"/>
<circle cx="30.8" cy="115.3" r="3.0" fill="url(#ball)" stroke="#12306a" stroke-width="0.9"/>
<circle cx="38.3" cy="107" r="3.0" fill="url(#ball)" stroke="#12306a" stroke-width="0.9"/>
<circle cx="45.5" cy="100.5" r="3.0" fill="url(#ball)" stroke="#12306a" stroke-width="0.9"/>
<path d="M35.5,115.5 L38,113.5 L38,117.5 Z M47.5,115.5 L45,113.5 L45,117.5 Z" fill="#12306a"/><path d="M38.5,115.5 L44.5,115.5" stroke="#12306a" stroke-width="1" stroke-dasharray="1.5,1"/>
<rect x="54.5" y="100.5" width="19" height="15" fill="url(#gring)" stroke="#111" stroke-width="1"/><rect x="57.5" y="103.5" width="13" height="9" fill="#eef2f8" stroke="#111" stroke-width="0.9"/>
<circle cx="90" cy="107.8" r="9" fill="none" stroke="#111" stroke-width="4.4"/><circle cx="90" cy="107.8" r="9" fill="none" stroke="url(#gring)" stroke-width="2.6"/><circle cx="90" cy="107.8" r="6.5" fill="#eef2f8"/><path d="M88.5,106.3 L91.5,109.3 M91.5,106.3 L88.5,109.3" stroke="#6a7a8a" stroke-width="0.7"/>
<ellipse cx="116" cy="107.8" rx="8.8" ry="6.8" fill="none" stroke="#111" stroke-width="4.2"/><ellipse cx="116" cy="107.8" rx="8.8" ry="6.8" fill="none" stroke="url(#gring)" stroke-width="2.4"/><ellipse cx="116" cy="107.8" rx="6.5" ry="4.6" fill="#eef2f8"/><path d="M114.6,106.4 L117.4,109.2 M117.4,106.4 L114.6,109.2" stroke="#6a7a8a" stroke-width="0.7"/>
<path d="M149,107 A8,6.5 0 1 0 142,114.5" fill="none" stroke="#111" stroke-width="3.8000000000000003" stroke-linecap="round" stroke-linejoin="round"/><path d="M149,107 A8,6.5 0 1 0 142,114.5" fill="none" stroke="#3ccf3c" stroke-width="2.2" stroke-linecap="round" stroke-linejoin="round"/>
<path d="M140.6,106.4 L143.4,109.2 M143.4,106.4 L140.6,109.2" stroke="#6a7a8a" stroke-width="0.7"/>
<circle cx="149.1" cy="108" r="3.0" fill="url(#ball)" stroke="#12306a" stroke-width="0.9"/>
<circle cx="142" cy="114.5" r="3.0" fill="url(#ball)" stroke="#12306a" stroke-width="0.9"/>
<path d="M163.3,103 A8,6.5 0 0 1 175.3,108" fill="none" stroke="#111" stroke-width="3.8000000000000003" stroke-linecap="round" stroke-linejoin="round"/><path d="M163.3,103 A8,6.5 0 0 1 175.3,108" fill="none" stroke="#3ccf3c" stroke-width="2.2" stroke-linecap="round" stroke-linejoin="round"/>
<path d="M163.3,103 A8,6.5 0 0 0 168.3,114" fill="none" stroke="#111" stroke-width="3.8000000000000003" stroke-linecap="round" stroke-linejoin="round"/><path d="M163.3,103 A8,6.5 0 0 0 168.3,114" fill="none" stroke="#3ccf3c" stroke-width="2.2" stroke-linecap="round" stroke-linejoin="round"/>
<circle cx="163.3" cy="103" r="3.0" fill="url(#ball)" stroke="#12306a" stroke-width="0.9"/>
<circle cx="175.3" cy="108" r="3.0" fill="url(#ball)" stroke="#12306a" stroke-width="0.9"/>
<circle cx="168.3" cy="114" r="3.0" fill="url(#ball)" stroke="#12306a" stroke-width="0.9"/>
<path d="M38,129.5 L46,134 L46,143 L38,147.5 L30,143 L30,134 Z" fill="none" stroke="#111" stroke-width="4.4" stroke-linejoin="round"/><path d="M38,129.5 L46,134 L46,143 L38,147.5 L30,143 L30,134 Z" fill="#eef0f4" stroke="#2cb02c" stroke-width="2.6" stroke-linejoin="round"/><path d="M38,132.5 L43.2,135.5 L43.2,141.5 L38,144.5 L32.8,141.5 L32.8,135.5 Z" fill="#eef0f4" stroke="#222" stroke-width="0.6"/>
<g transform="translate(64.65,138.75) rotate(-45)"><ellipse cx="-4" cy="0" rx="3" ry="5" fill="none" stroke="#111" stroke-width="3"/><ellipse cx="0" cy="0" rx="3" ry="5.5" fill="none" stroke="#111" stroke-width="3"/><ellipse cx="4" cy="0" rx="3" ry="5" fill="none" stroke="#111" stroke-width="3"/><ellipse cx="-4" cy="0" rx="3" ry="5" fill="none" stroke="#3ccf3c" stroke-width="1.3"/><ellipse cx="0" cy="0" rx="3" ry="5.5" fill="none" stroke="#3ccf3c" stroke-width="1.3"/><ellipse cx="4" cy="0" rx="3" ry="5" fill="none" stroke="#3ccf3c" stroke-width="1.3"/></g>
<circle cx="57.6" cy="146" r="3.0" fill="url(#ball)" stroke="#12306a" stroke-width="0.9"/>
<circle cx="71.7" cy="131.5" r="2.8" fill="url(#ball)" stroke="#12306a" stroke-width="0.9"/>
<g transform="translate(91,139) rotate(-40)"><ellipse cx="-3" cy="0" rx="7" ry="4" fill="none" stroke="#111" stroke-width="3"/><ellipse cx="3" cy="0" rx="7" ry="4" fill="none" stroke="#111" stroke-width="3"/><ellipse cx="-3" cy="0" rx="7" ry="4" fill="none" stroke="#3ccf3c" stroke-width="1.3"/><ellipse cx="3" cy="0" rx="7" ry="4" fill="none" stroke="#3ccf3c" stroke-width="1.3"/></g>
<circle cx="84" cy="146" r="3.0" fill="url(#ball)" stroke="#12306a" stroke-width="0.9"/>
<circle cx="98.5" cy="132" r="2.8" fill="url(#ball)" stroke="#12306a" stroke-width="0.9"/>
<path d="M115,130 L124,130 L124,140 L115,140 Z" fill="none" stroke="#111" stroke-width="3"/><path d="M115,130 L124,130 L124,140 L115,140 Z" fill="none" stroke="#3ccf3c" stroke-width="1.3"/>
<path d="M112,133 L121,133 L121,143 L112,143 Z" fill="#dde4ea" stroke="#111" stroke-width="3"/><path d="M112,133 L121,133 L121,143 L112,143 Z" fill="none" stroke="#3ccf3c" stroke-width="1.3"/>
<path d="M109,136 L118,136 L118,145 L109,145 Z" fill="#dde4ea" stroke="#111" stroke-width="3"/><path d="M109,136 L118,136 L118,145 L109,145 Z" fill="none" stroke="#3ccf3c" stroke-width="1.3"/><path d="M112,140 L115,142" stroke="#fff" stroke-width="1"/>
<circle cx="109" cy="146" r="2.8" fill="url(#ball)" stroke="#12306a" stroke-width="0.9"/>
<circle cx="123.5" cy="131" r="2.6" fill="url(#ball)" stroke="#12306a" stroke-width="0.9"/>
<path d="M136,145 C140,140 143,136 148,132" fill="none" stroke="#111" stroke-width="4.4"/><path d="M136,145 C140,140 143,136 148,132" fill="none" stroke="#3ccf3c" stroke-width="2.2" stroke-dasharray="2,1"/>
<circle cx="134.5" cy="144" r="2.8" fill="url(#ball)" stroke="#12306a" stroke-width="0.9"/>
<circle cx="139" cy="146" r="2.8" fill="url(#ball)" stroke="#12306a" stroke-width="0.9"/>
<circle cx="147.5" cy="131" r="2.8" fill="url(#ball)" stroke="#12306a" stroke-width="0.9"/>
<circle cx="150" cy="134" r="2.8" fill="url(#ball)" stroke="#12306a" stroke-width="0.9"/>
<path d="M176,143 C172,149 160,148 160,138 C160,130 168,128 172,131 C176,134 174,141 168,141 C164,141 164,136 167,135" fill="none" stroke="#111" stroke-width="4.2" stroke-linecap="round"/><path d="M176,143 C172,149 160,148 160,138 C160,130 168,128 172,131 C176,134 174,141 168,141 C164,141 164,136 167,135" fill="none" stroke="#3ccf3c" stroke-width="2.4" stroke-linecap="round"/>
<path d="M31.5,161.8 L46.5,161.8 L46.5,177.5 L31.5,177.5 L29,174.5 L29,165 Z" fill="url(#lb)" stroke="#111" stroke-width="1"/><ellipse cx="38" cy="170" rx="4.3" ry="2.4" fill="#cfe6fb" stroke="#111" stroke-width="0.9"/>
<path d="M55.5,173.5 C60,170 63,166 66,163.5 C69,164 72,165 74,167 C72,171 71,175 69,178 C66,175 62,174 55.5,173.5 Z" fill="url(#lb)" stroke="#111" stroke-width="1"/>
<rect x="80.5" y="161.5" width="19" height="17" fill="#9ccdfb" stroke="#111" stroke-width="1"/>
<circle cx="116" cy="169.8" r="9.2" fill="#9ccdfb" stroke="#333" stroke-width="1"/>
<path d="M132.5,161.5 L135.5,161.5 L135.5,175.5 L139.5,175.5 L139.5,161.5 L151.5,161.5 L151.5,178.5 L148.5,178.5 L148.5,164.5 L142.5,164.5 L142.5,178.5 L132.5,178.5 Z" fill="#b8defc" stroke="#111" stroke-width="1"/>
<path d="M159.5,166.5 L164.5,161.5 L177.5,161.5 L177.5,173.5 L172.5,178.5 L159.5,178.5 Z" fill="#b8defc" stroke="#111" stroke-width="1"/><rect x="159.5" y="166.5" width="13" height="12" fill="#8cc4f8" stroke="#111" stroke-width="1"/><path d="M172.5,166.5 L177.5,161.5" stroke="#111" stroke-width="1"/>
</svg>
<!-- /ICONS LEFT -->
<!-- button bar -->
<div class="a" style="left:14px;top:186px;width:185px;height:11px;background:#f0f0f0;border:1px solid #a0a0a0;border-left-color:#c8c8c8;border-right-color:#c8c8c8"></div>
<svg class="a" style="left:103px;top:189px" width="7" height="5"><path d="M0.5,0.5 L6.5,0.5 L3.5,4 Z" fill="#000"/></svg>
<div class="a" style="left:10px;top:199px;width:190px;height:1px;background:#a8a8a8"></div>
<div class="a" style="left:10px;top:200px;width:193px;height:25px;background:#eef0fb"></div>
<div class="a" style="left:12px;top:200px;width:62px;height:20px;background:#fff;border:1px solid #e4e4e4;border-top:none"></div>
<div class="a" style="left:74px;top:200px;width:47px;height:19px;background:#efefef;border:1px solid #dcdcdc;border-top:none;border-left:none"></div>
<div class="t" style="left:18.5px;top:203.5px;font-size:11px">Geometry</div>
<div class="t" style="left:80px;top:203px;font-size:11.5px;color:#8a8a8a">Model</div>
<div class="a" style="left:8px;top:225px;width:197px;height:1px;background:#a8a8a8"></div>
<div class="a" style="left:8px;top:226px;width:197px;height:4px;background:#fafafa"></div>

<!-- PROPERTIES -->
<div class="hdr" style="left:10px;top:230px;width:193px;height:23px;padding-top:1px">Properties</div>
<svg class="x" style="left:190px;top:236px" viewBox="0 0 11 11"><path d="M1.8,2.5 L8.8,8.5 M8.8,2.5 L1.8,8.5" stroke="#000" stroke-width="1.9"/></svg>
<div class="a" style="left:10px;top:253px;width:193px;height:22px;background:#e1e1e1;border:1px solid #adadad"></div>
<svg class="a" style="left:189px;top:261px" width="11" height="7"><path d="M0.5,0.5 L5.5,5.5 L10.5,0.5" fill="none" stroke="#444" stroke-width="1.2"/></svg>
<div class="a" style="left:10px;top:275px;width:193px;height:27px;background:linear-gradient(#f6f7fd 0%,#f3f4fb 30%,#c6c6d8 100%)"></div>
<div class="a" style="left:42px;top:278px;width:1px;height:21px;background:#d4d4dc"></div>
<div class="a" style="left:10px;top:302px;width:193px;height:255px;background:#fff"></div>
<div class="a" style="left:120px;top:302px;width:1px;height:251px;background:#ececec"></div>
<div class="t" style="left:15px;top:307px">Property</div>
<div class="t" style="left:126px;top:307px">Value</div>
<svg class="a" style="left:0;top:270px" width="210" height="40" viewBox="0 270 210 40">
<g stroke="#a8a8b4" stroke-width="1" fill="#f4f4f8">
<rect x="17.5" y="280.5" width="6" height="6" rx="1"/><rect x="17.5" y="289.5" width="6" height="6" rx="1"/>
</g>
<path d="M18.5,283.5 L22.5,283.5 M20.5,281.5 L20.5,285.5 M18.5,292.5 L22.5,292.5 M20.5,290.5 L20.5,294.5" stroke="#606070" stroke-width="1.2"/>
<path d="M25,282 L29,282 M25,284.5 L29,284.5 M30,284.5 L33,284.5 M25,286.5 L29,286.5 M30,286.5 L33,286.5 M25,288.5 L29,288.5 M30,288.5 L33,288.5 M25,290.5 L29,290.5 M30,290.5 L33,290.5 M25,293 L29,293 M25,295.5 L29,295.5 M30,295.5 L33,295.5" stroke="#b4b4bc" stroke-width="0.8"/>
</svg>
<svg class="a" style="left:36px;top:400px" width="30" height="30" viewBox="36 400 30 30"><path d="M43.5,408.5 L43.5,424 L47,420.5 L50,426.5 L52.5,425.5 L50,420 L54.5,420 Z" fill="#fff" stroke="#000" stroke-width="1" stroke-linejoin="round"/></svg>
<!-- description box -->
<div class="a" style="left:11px;top:557px;width:190px;height:98px;background:#efefef;border-top:2px solid #6c6c6c;border-left:2px solid #6c6c6c;border-right:1px solid #e0e0e0;border-bottom:1px solid #e0e0e0"></div>
<div class="a" style="left:183px;top:559px;width:1px;height:95px;background:#fff"></div>
<svg class="a" style="left:187px;top:564px" width="9" height="6"><path d="M1,5 L4.5,1.5 L8,5" fill="none" stroke="#b8b8b8" stroke-width="1.8"/></svg>
<svg class="a" style="left:187px;top:642px" width="9" height="6"><path d="M1,1 L4.5,4.5 L8,1" fill="none" stroke="#b8b8b8" stroke-width="1.8"/></svg>

<!-- OPERATIONS -->
<div class="a" style="left:213px;top:6px;width:246px;height:57px;background:#a3a3a3"></div>
<div class="a" style="left:215px;top:8px;width:242px;height:53px;background:#fff"></div>
<div class="hdr" style="left:216px;top:9px;width:240px;height:23px;background:#a1a1a1;padding-top:1px">Operations</div>
<svg class="x" style="left:443px;top:15px" viewBox="0 0 11 11"><path d="M1.8,2.5 L8.8,8.5 M8.8,2.5 L1.8,8.5" stroke="#000" stroke-width="1.9"/></svg>
<div class="a" style="left:216px;top:32px;width:240px;height:28px;background:linear-gradient(#f8f9fe 0%,#f3f4fb 30%,#bcbcd0 100%)"></div>
<svg class="a" style="left:0;top:0" width="460" height="64" viewBox="0 0 460 64">
<defs><linearGradient id="lb3" x1="0" y1="0" x2="0" y2="1"><stop offset="0" stop-color="#d0e8ff"/><stop offset="1" stop-color="#90c8f8"/></linearGradient></defs>
<g stroke="#000" stroke-width="1.4" stroke-linejoin="round">
<path d="M222.5,55.5 L227.8,47.5 L232,55.5 Z" fill="#a8d4fa"/>
<path d="M234.5,44.5 L238.5,36.5 L243,44.5 Z" fill="#a8d4fa"/>
<path d="M229,52 L236,45" stroke="#000" stroke-width="3.4" fill="none"/>
<path d="M229,52 L236,45" stroke="#30e030" stroke-width="1.8" fill="none"/>
<path d="M237.5,43 L232.5,44 L236.5,48 Z" fill="#30e030" stroke-width="0.8"/>
<path d="M248.5,45 L254.5,45 L251.5,48 Z" fill="#000" stroke="none"/>
<rect x="267.5" y="37.5" width="13" height="13" fill="#b4dcfc" stroke-width="1.6"/>
<rect x="263.5" y="42.5" width="13" height="12.5" fill="#a8d4fa" stroke-width="1.6"/>
<rect x="267.5" y="42.5" width="9" height="8" fill="#b8defc" stroke="none"/>
<rect x="267.5" y="42.5" width="9" height="8" fill="none" stroke-dasharray="1.2,1.3" stroke-width="1.2"/>
<path d="M287.5,45 L293.5,45 L290.5,48 Z" fill="#000" stroke="none"/>
</g>
<path d="M300.5,36 L300.5,57" stroke="#d0d0d8"/>
<path d="M386.5,36 L386.5,57" stroke="#d0d0d8"/>
<g stroke="#000" stroke-width="1.4" stroke-linejoin="round">
<!-- chamfer -->
<path d="M307.5,42.5 L313.5,36.5 L326.5,49.5 L320.5,55.5 Z" fill="#bfe0fc"/>
<path d="M307.5,42.5 L320.5,55.5 L307.5,55.5 Z" fill="#8cc4f8"/>
<path d="M313.5,36.5 L326.5,36.5 L326.5,49.5 M307.5,42.5 L320.5,42.5 L320.5,55.5 M320.5,42.5 L326.5,36.5" fill="none" stroke-dasharray="1.5,1.2" stroke-width="1.1"/>
<!-- fillet -->
<path d="M333.5,42.5 L339.5,36.5 L352.5,36.5 L352.5,49.5 L346.5,55.5 L333.5,55.5 Z" fill="#bfe0fc"/>
<path d="M333.5,42.5 Q346.5,42.5 346.5,55.5 L333.5,55.5 Z" fill="#8cc4f8"/>
<path d="M339.5,36.5 L352.5,36.5 L352.5,49.5 M339.5,42.5 L346.5,42.5 L352.5,36.5 M346.5,42.5 L346.5,49" fill="none" stroke-dasharray="1.5,1.2" stroke-width="1.1"/>
<!-- shell -->
<path d="M360.5,42.5 L366.5,36.5 L379.5,36.5 L373.5,42.5 Z" fill="#c8e4fc"/>
<path d="M360.5,55.5 L366.5,49.5 L379.5,49.5 L373.5,55.5 Z" fill="#8cc4f8"/>
<path d="M360.5,42.5 L360.5,55.5 M373.5,42.5 L373.5,55.5 M379.5,36.5 L379.5,49.5 M366.5,45 L366.5,49.5 M360.5,45.5 L373.5,45.5 L379.5,39.5" fill="none" stroke-dasharray="1.4,1.2" stroke-width="1"/>
<!-- box lid -->
<path d="M397.5,42.5 L403.5,36.5 L413,36.5 L408,42.5 Z" fill="#b4d8f8" transform="translate(0,-1)"/>
<path d="M397.5,43.5 L402.5,40.5 L412.5,40.5 L412.5,49.5 L407.5,55.5 Z" fill="#7a8a9a"/>
<rect x="397.5" y="43.5" width="10" height="12" fill="#8cc4f8"/>
<path d="M407.5,43.5 L412.5,40.5 L412.5,50 L407.5,55.5 Z" fill="#b8defc"/>
<path d="M420.5,45 L426.5,45 L423.5,48 Z" fill="#000" stroke="none"/>
</g>
<!-- disabled icon -->
<g stroke="#6a6e78" stroke-width="1.1" fill="#a8acb6" stroke-linejoin="round">
<path d="M437,42 L442,37 L452,37 L447,42 Z" fill="#c4c8d0"/>
<path d="M432.5,44 L432.5,54 L436,51 L436,41 Z"/>
<path d="M448.5,42 L452.5,38.5 L452.5,49 L448.5,53 Z"/>
<rect x="436.5" y="43.5" width="10" height="10" fill="#c8ccd4"/>
<path d="M436,55.5 L441,51.5 L451,51.5 L446,55.5 Z"/>
<rect x="439" y="40" width="3" height="3" fill="#fff" stroke="none"/>
</g>
</svg>

<!-- PROJECT TREE -->
<div class="a" style="left:748px;top:6px;width:183px;height:655px;background:#fdfdfd;border-right:2px solid #747474;border-bottom:2px solid #747474"></div>
<div class="hdr" style="left:752px;top:10px;width:175px;height:23px;padding-top:1px">Project Tree</div>
<svg class="x" style="left:913px;top:16px" viewBox="0 0 11 11"><path d="M1.8,2.5 L8.8,8.5 M8.8,2.5 L1.8,8.5" stroke="#000" stroke-width="1.9"/></svg>
<div class="a" style="left:752px;top:33px;width:175px;height:28px;background:linear-gradient(#f7f8fe 0%,#f2f3fb 30%,#c2c2d6 100%)"></div>
<div class="a" style="left:752px;top:61px;width:175px;height:28px;background:#f0f0f0;border:1px solid #8c8c8c;border-bottom:none;border-right:none"></div>
<div class="a" style="left:756px;top:65px;width:22px;height:21px;background:#e4e4e4;border:1px solid #b0b0b0;border-right:none"></div>
<div class="a" style="left:779px;top:65px;width:143px;height:21px;background:#fff;border:1px solid #7a7a7a"></div>
<svg class="a" style="left:906px;top:72px" width="12" height="7"><path d="M0.5,0.5 L6,6 L11.5,0.5" fill="none" stroke="#444" stroke-width="1.2"/></svg>
<div class="a" style="left:752px;top:89px;width:175px;height:568px;background:#fff;border:1px solid #6e6e6e;border-top:2px solid #6e6e6e"></div>

<svg class="a" style="left:0;top:0;overflow:visible" width="936" height="400" viewBox="0 0 936 400"><defs><radialGradient id="ball2" cx="0.38" cy="0.35" r="0.7"><stop offset="0" stop-color="#d8f0ff"/><stop offset="0.35" stop-color="#5aa0ea"/><stop offset="1" stop-color="#1848a0"/></radialGradient><linearGradient id="exp" x1="0" y1="0" x2="0" y2="1"><stop offset="0" stop-color="#fff"/><stop offset="1" stop-color="#e0e0e0"/></linearGradient></defs>
<path d="M761.5,103 L761.5,322" stroke="#a8a8a8" stroke-width="1"/>
<path d="M777.5,108 L777.5,113" stroke="#a8a8a8" stroke-width="1"/>
<path d="M793.5,127 L793.5,132" stroke="#a8a8a8" stroke-width="1"/>
<path d="M809.5,146 L809.5,151" stroke="#a8a8a8" stroke-width="1"/>
<path d="M793.5,141 L793.5,246" stroke="#a8a8a8" stroke-width="1"/>
<path d="M809.5,160 L809.5,170" stroke="#a8a8a8" stroke-width="1"/>
<path d="M825.5,185 L825.5,213" stroke="#a8a8a8" stroke-width="1"/>
<path d="M777.5,336 L777.5,341" stroke="#a8a8a8" stroke-width="1"/>
<path d="M793.5,355 L793.5,360" stroke="#a8a8a8" stroke-width="1"/>
<rect x="757.5" y="94.5" width="8" height="8" rx="1" fill="url(#exp)" stroke="#a4a4a4" stroke-width="1"/>
<path d="M759,98.5 L764,98.5" stroke="#2a4a9a" stroke-width="1"/>
<path d="M766,98.5 L769,98.5" stroke="#a8a8a8" stroke-width="1"/>
<g transform="translate(773,90)"><path d="M0.5,2.5 L1.5,0.5 L6,0.5 L7.5,2.5 L14.5,2.5 L15.5,3.5 L15.5,15.5 L0.5,15.5 Z" fill="#f6dc80" stroke="#111" stroke-width="1.2"/><path d="M2.5,10 C5,7 7,5 9.5,4.5 C11,5.5 13,6.5 14.8,8 C13.5,10.5 12,13 10.5,16 C8,14 5,12 2.5,10 Z" fill="#a8d0f8" stroke="#111" stroke-width="1.3"/><path d="M0.5,8 L2.5,10" stroke="#111" stroke-width="1.3"/></g>
<rect x="773.5" y="113.5" width="8" height="8" rx="1" fill="url(#exp)" stroke="#a4a4a4" stroke-width="1"/>
<path d="M775,117.5 L780,117.5" stroke="#2a4a9a" stroke-width="1"/>
<path d="M782,117.5 L785,117.5" stroke="#a8a8a8" stroke-width="1"/>
<g transform="translate(789,109)"><path d="M9.5,4.5 L12.5,1.5 L16.5,1.5 L16.5,10.5 L13.5,13.5 L9.5,13.5 Z" fill="#6a9ad0" stroke="#111" stroke-width="1.3"/><path d="M7,10 L11,7 L15.5,9 L15.5,13 L11,16.5 L7,14.5 Z" fill="#a8d0f8" stroke="#111" stroke-width="1.3"/><circle cx="5.8" cy="9" r="5.2" fill="#b0d8fa" stroke="#111" stroke-width="1.3"/><path d="M12.5,4.5 L15,4.5 L15,9" fill="none" stroke="#fff" stroke-width="0.8"/></g>
<rect x="789.5" y="132.5" width="8" height="8" rx="1" fill="url(#exp)" stroke="#a4a4a4" stroke-width="1"/>
<path d="M791,136.5 L796,136.5" stroke="#2a4a9a" stroke-width="1"/>
<path d="M798,136.5 L801,136.5" stroke="#a8a8a8" stroke-width="1"/>
<g transform="translate(805,128)"><path d="M0.5,8.5 L9.5,0.5 L15.5,3.5 L10,14.5 Z" fill="#a8d0f8" stroke="#111" stroke-width="1.3" stroke-linejoin="round"/></g>
<rect x="805.5" y="151.5" width="8" height="8" rx="1" fill="url(#exp)" stroke="#a4a4a4" stroke-width="1"/>
<path d="M807,155.5 L812,155.5" stroke="#2a4a9a" stroke-width="1"/>
<path d="M809.5,153 L809.5,158" stroke="#2a4a9a" stroke-width="1"/>
<path d="M814,155.5 L817,155.5" stroke="#a8a8a8" stroke-width="1"/>
<g transform="translate(821,147)"><path d="M1,7 C1,2 5,1 8,1 C13,1 15,3 15,7 C15,12 11,14 7,14 C3,14 1,11 1,7 Z" fill="#9ccaf6" stroke="#111" stroke-width="1.3"/><path d="M6.5,10.5 L8.5,9 L15.5,9 L15.5,15.5 L6.5,15.5 Z" fill="#f2d470" stroke="#111" stroke-width="1.3"/></g>
<rect x="805.5" y="170.5" width="8" height="8" rx="1" fill="url(#exp)" stroke="#a4a4a4" stroke-width="1"/>
<path d="M807,174.5 L812,174.5" stroke="#2a4a9a" stroke-width="1"/>
<path d="M814,174.5 L817,174.5" stroke="#a8a8a8" stroke-width="1"/>
<g transform="translate(821,166)"><path d="M0.5,2.5 L1.5,0.5 L6,0.5 L7,2 L14.5,2 L15.5,3 L15.5,13.5 L0.5,13.5 Z" fill="#8cc0f0" stroke="#111" stroke-width="1.3"/><circle cx="11.5" cy="11.5" r="4.5" fill="#d8e6f4" stroke="#222" stroke-width="1"/><path d="M11.5,9 L11.5,12" stroke="#333" stroke-width="0.8"/></g>
<path d="M825,193.5 L833,193.5" stroke="#a8a8a8" stroke-width="1"/>
<g transform="translate(837,185)"><path d="M0.5,5.5 L4.5,1.5 L14.5,1.5 L14.5,10.5 L10.5,14.5 L0.5,14.5 Z" fill="#b8defc" stroke="#111" stroke-width="1.3"/><rect x="0.5" y="5.5" width="10" height="9" fill="#8cc4f8" stroke="#111" stroke-width="1.3"/><path d="M10.5,5.5 L14.5,1.5" stroke="#111" stroke-width="1.3"/></g>
<path d="M825,212.5 L833,212.5" stroke="#a8a8a8" stroke-width="1"/>
<g transform="translate(837,204)"><path d="M0.5,6.5 L5,1.5 L10.5,14.5 L0.5,14.5 Z" fill="#8cc4f8" stroke="#111" stroke-width="1.3"/><path d="M5,1.5 L14.5,11 L14.5,12 L10.5,14.5 Z" fill="#b8defc" stroke="#111" stroke-width="1.3"/><path d="M5,1.5 L14.5,1.5 L14.5,11" fill="none" stroke="#111" stroke-width="0.9" stroke-dasharray="1.5,1.2"/></g>
<rect x="789.5" y="227.5" width="8" height="8" rx="1" fill="url(#exp)" stroke="#a4a4a4" stroke-width="1"/>
<path d="M791,231.5 L796,231.5" stroke="#2a4a9a" stroke-width="1"/>
<path d="M793.5,229 L793.5,234" stroke="#2a4a9a" stroke-width="1"/>
<path d="M798,231.5 L801,231.5" stroke="#a8a8a8" stroke-width="1"/>
<g transform="translate(805,223)"><path d="M0.5,8.5 L9.5,0.5 L15.5,3.5 L10,14.5 Z" fill="#a8d0f8" stroke="#111" stroke-width="1.3" stroke-linejoin="round"/></g>
<rect x="789.5" y="246.5" width="8" height="8" rx="1" fill="url(#exp)" stroke="#a4a4a4" stroke-width="1"/>
<path d="M791,250.5 L796,250.5" stroke="#2a4a9a" stroke-width="1"/>
<path d="M793.5,248 L793.5,253" stroke="#2a4a9a" stroke-width="1"/>
<path d="M798,250.5 L801,250.5" stroke="#a8a8a8" stroke-width="1"/>
<g transform="translate(805,242)"><path d="M0.5,8.5 L9.5,0.5 L15.5,3.5 L10,14.5 Z" fill="#a8d0f8" stroke="#111" stroke-width="1.3" stroke-linejoin="round"/></g>
<path d="M761,269.5 L769,269.5" stroke="#a8a8a8" stroke-width="1"/>
<g transform="translate(773,261)"><rect x="1.5" y="0.5" width="8" height="8" fill="#4cd04c" stroke="#111" stroke-width="1.3"/><rect x="9.5" y="2.5" width="5" height="8" fill="#8ec4f2" stroke="#111" stroke-width="1.3"/><rect x="4.5" y="6.5" width="6" height="7" fill="#f4824a" stroke="#111" stroke-width="1.3"/></g>
<path d="M761,288.5 L769,288.5" stroke="#a8a8a8" stroke-width="1"/>
<g transform="translate(773,280)"><path d="M0.5,2.5 L1.5,0.5 L6,0.5 L7,2 L14.5,2 L15.5,3 L15.5,15.5 L0.5,15.5 Z" fill="#f6dc80" stroke="#111" stroke-width="1.3"/><path d="M5,9 L5,13 L10,13" fill="none" stroke="#888" stroke-width="2"/><rect x="8.5" y="5.5" width="4.5" height="4.5" fill="#f47a3a" stroke="#111" stroke-width="1.3"/></g>
<path d="M761,307.5 L769,307.5" stroke="#a8a8a8" stroke-width="1"/>
<g transform="translate(773,299)"><path d="M0.5,2.5 L1.5,0.5 L6,0.5 L7,2 L14.5,2 L15.5,3 L15.5,15.5 L0.5,15.5 Z" fill="#e8e8e8" stroke="#111" stroke-width="1.3"/><path d="M5,9 L5,13 L10,13" fill="none" stroke="#888" stroke-width="2"/><rect x="8.5" y="5.5" width="4.5" height="4.5" fill="#30d030" stroke="#111" stroke-width="1.3"/></g>
<rect x="757.5" y="322.5" width="8" height="8" rx="1" fill="url(#exp)" stroke="#a4a4a4" stroke-width="1"/>
<path d="M759,326.5 L764,326.5" stroke="#2a4a9a" stroke-width="1"/>
<path d="M766,326.5 L769,326.5" stroke="#a8a8a8" stroke-width="1"/>
<g transform="translate(773,318)"><path d="M0.5,2.5 L1.5,0.5 L6,0.5 L7,2 L14.5,2 L15.5,3 L15.5,13.5 L0.5,13.5 Z" fill="#f6dc80" stroke="#111" stroke-width="1.3"/><path d="M5.5,6 L12,10 L5.5,15 Z" fill="#3cd03c" stroke="#117711" stroke-width="0.9"/></g>
<rect x="773.5" y="341.5" width="8" height="8" rx="1" fill="url(#exp)" stroke="#a4a4a4" stroke-width="1"/>
<path d="M775,345.5 L780,345.5" stroke="#2a4a9a" stroke-width="1"/>
<path d="M782,345.5 L785,345.5" stroke="#a8a8a8" stroke-width="1"/>
<g transform="translate(789,337)"><path d="M5,1 L14,5 L7,10 Z" fill="#3cd03c" stroke="#117711" stroke-width="0.9"/><circle cx="6" cy="10" r="5" fill="#f06a20" stroke="#111" stroke-width="1.3" stroke-dasharray="2.2,1"/><circle cx="6" cy="10" r="2" fill="#fff" stroke="#333" stroke-width="0.6"/></g>
<rect x="789.5" y="360.5" width="8" height="8" rx="1" fill="url(#exp)" stroke="#a4a4a4" stroke-width="1"/>
<path d="M791,364.5 L796,364.5" stroke="#2a4a9a" stroke-width="1"/>
<path d="M793.5,362 L793.5,367" stroke="#2a4a9a" stroke-width="1"/>
<path d="M798,364.5 L801,364.5" stroke="#a8a8a8" stroke-width="1"/>
<g transform="translate(805,356)"><path d="M0.5,4.5 L4.5,0.5 L15.5,0.5 L15.5,11.5 L11.5,15.5 L0.5,15.5 Z" fill="#c4e0fa" stroke="#3a5a80" stroke-width="1"/><path d="M0.5,4.5 L11.5,4.5 L11.5,15.5 M11.5,4.5 L15.5,0.5" fill="none" stroke="#3a5a80" stroke-width="1"/><path d="M8,3 L8,11 L4,14 M8,11 L13,11" fill="none" stroke="#111" stroke-width="1.2"/></g>
<path d="M797.5,37 L797.5,59" stroke="#d0d0d8" stroke-width="1"/><path d="M844.5,37 L844.5,59" stroke="#d0d0d8" stroke-width="1"/><path d="M904.5,37 L904.5,59" stroke="#d0d0d8" stroke-width="1"/>
<rect x="768.5" y="40.5" width="8" height="8" fill="#f8e070" stroke="#111" stroke-width="1"/><path d="M766,48 L772,45 L776,49 L774,54 L768,54 Z" fill="#f49a5a" stroke="#a04010" stroke-width="0.8"/><circle cx="766" cy="46" r="5.2" fill="url(#gball)" stroke="#116611" stroke-width="0.6"/>
<defs><radialGradient id="gball" cx="0.4" cy="0.35" r="0.7"><stop offset="0" stop-color="#b8ffb8"/><stop offset="0.4" stop-color="#30d030"/><stop offset="1" stop-color="#108010"/></radialGradient></defs>
<path d="M785,46 L791,46 L788,49 Z" fill="#000"/><path d="M832,46 L838,46 L835,49 Z" fill="#000"/>
<path d="M807.5,38.5 L807.5,52 M805.5,41 L807.5,38 L809.5,41" fill="none" stroke="#2a58a0" stroke-width="1.2"/><path d="M810.5,41 L810.5,55 M808.5,52 L810.5,55 L812.5,52" fill="none" stroke="#6a8ac0" stroke-width="1.2"/>
<text x="816.5" y="45" font-family="Liberation Serif" font-weight="bold" font-size="9" fill="#d02020" text-anchor="middle">A</text><text x="816.5" y="55" font-family="Liberation Serif" font-weight="bold" font-size="9" fill="#7090c0" text-anchor="middle">Z</text>
<rect x="822.5" y="37.5" width="3" height="3" fill="#fff" stroke="#7a9ad0" stroke-width="1"/>
<rect x="822.5" y="42.0" width="3" height="3" fill="#fff" stroke="#7a9ad0" stroke-width="1"/>
<rect x="822.5" y="46.5" width="3" height="3" fill="#fff" stroke="#d83030" stroke-width="1"/>
<rect x="822.5" y="51.0" width="3" height="3" fill="#fff" stroke="#d83030" stroke-width="1"/>
<rect x="853.5" y="39.5" width="6" height="6" rx="1" fill="#f0f0f4" stroke="#a0a0b0" stroke-width="1"/><path d="M854.5,42.5 L858.5,42.5 M856.5,40.5 L856.5,44.5" stroke="#707080" stroke-width="1"/>
<path d="M861,41.5 L865,41.5" stroke="#c8c8cc" stroke-width="0.8"/>
<path d="M861,43.5 L865,43.5" stroke="#c8c8cc" stroke-width="0.8"/>
<path d="M866,43.5 L869,43.5" stroke="#c8c8cc" stroke-width="0.8"/>
<path d="M861,45.5 L865,45.5" stroke="#c8c8cc" stroke-width="0.8"/>
<path d="M866,45.5 L869,45.5" stroke="#c8c8cc" stroke-width="0.8"/>
<path d="M861,47.5 L865,47.5" stroke="#c8c8cc" stroke-width="0.8"/>
<path d="M866,47.5 L869,47.5" stroke="#c8c8cc" stroke-width="0.8"/>
<path d="M861,49.5 L865,49.5" stroke="#c8c8cc" stroke-width="0.8"/>
<path d="M866,49.5 L869,49.5" stroke="#c8c8cc" stroke-width="0.8"/>
<path d="M861,51.5 L865,51.5" stroke="#c8c8cc" stroke-width="0.8"/>
<rect x="879.5" y="39.5" width="6" height="6" rx="1" fill="#fff" stroke="#3a8ae0" stroke-width="1.2"/><path d="M880.5,42.5 L884.5,42.5 M882.5,40.5 L882.5,44.5" stroke="#000" stroke-width="1.2"/>
<rect x="879.5" y="48.5" width="6" height="6" rx="1" fill="#fff" stroke="#3a8ae0" stroke-width="1.2"/><path d="M880.5,51.5 L884.5,51.5 M882.5,49.5 L882.5,53.5" stroke="#000" stroke-width="1.2"/>
<path d="M887,41.5 L891,41.5" stroke="#888" stroke-width="0.8"/><path d="M892,43.5 L895,43.5" stroke="#6aa" stroke-width="0.8"/>
<path d="M887,43.5 L891,43.5" stroke="#888" stroke-width="0.8"/><path d="M892,45.5 L895,45.5" stroke="#6aa" stroke-width="0.8"/>
<path d="M887,45.5 L891,45.5" stroke="#888" stroke-width="0.8"/><path d="M892,47.5 L895,47.5" stroke="#6aa" stroke-width="0.8"/>
<path d="M887,47.5 L891,47.5" stroke="#888" stroke-width="0.8"/><path d="M892,49.5 L895,49.5" stroke="#6aa" stroke-width="0.8"/>
<path d="M887,49.5 L891,49.5" stroke="#888" stroke-width="0.8"/><path d="M892,51.5 L895,51.5" stroke="#6aa" stroke-width="0.8"/>
<circle cx="769.5" cy="73" r="4.5" fill="#e8f2fc" stroke="#222" stroke-width="1.1"/><path d="M766.5,76 L761,81.5" stroke="#111" stroke-width="1.8" stroke-linecap="round"/>
</svg>
<div class="t" style="left:791.5px;top:92.5px;">Geometry</div>
<div class="t" style="left:807.5px;top:111.5px;">Bodies</div>
<div class="t" style="left:823.5px;top:130.5px;">Box 1</div>
<div class="t" style="left:839.5px;top:149.5px;">Volumes</div>
<div class="t" style="left:839.5px;top:168.5px;">Construction ...</div>
<div class="t" style="left:855.5px;top:187.5px;">Create Box</div>
<div class="t" style="left:855.5px;top:206.5px;letter-spacing:-0.3px;">Chamfer Ed...</div>
<div class="t" style="left:823.5px;top:225.5px;">Cylinder 1</div>
<div class="t" style="left:823.5px;top:244.5px;">Box 2</div>
<div class="t" style="left:791.5px;top:263.5px;">Groups</div>
<div class="t" style="left:791.5px;top:282.5px;">Models</div>
<div class="t" style="left:791.5px;top:301.5px;">Model Components</div>
<div class="t" style="left:791.5px;top:320.5px;font-weight:bold;">Tasks</div>
<div class="t" style="left:807.5px;top:339.5px;font-weight:bold;">Task 1</div>
<div class="t" style="left:823.5px;top:358.5px;">Environment</div>

</body></html>
